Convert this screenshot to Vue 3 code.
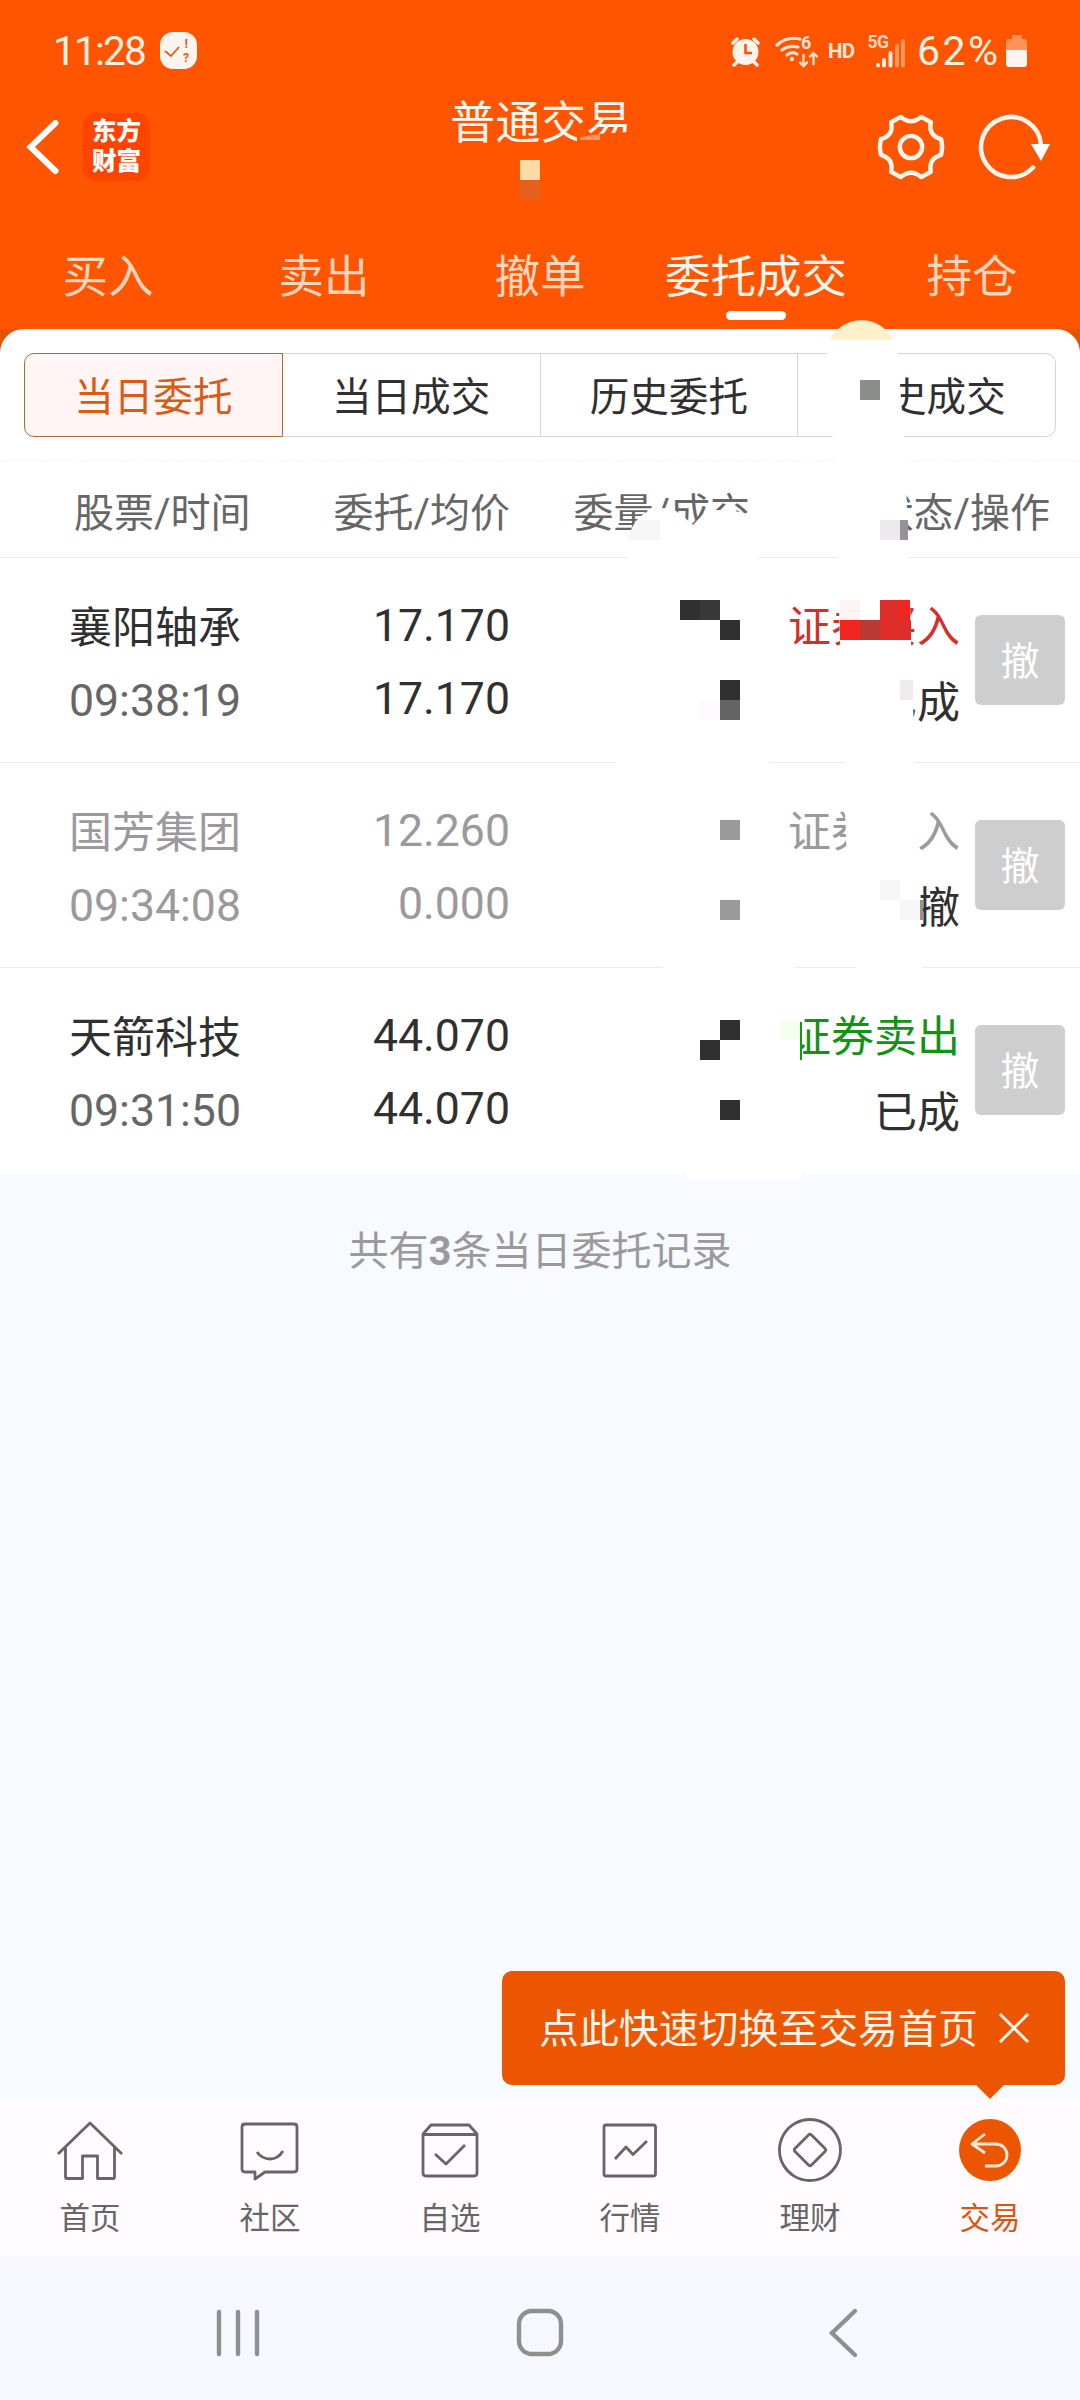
<template>
  <div class="phone">
    <header class="header">
      <div class="status-bar">
        <span class="clock">11:28</span>
        <svg class="notice" width="37" height="37" viewBox="0 0 37 37">
          <rect width="37" height="37" rx="13" fill="#fff3ee" />
          <path d="M5 19l6 5 8-9" fill="none" stroke="#d9601c" stroke-width="1.8" />
          <text x="24.5" y="16" font-size="13" font-weight="700" fill="#d9601c">!</text>
          <text x="23" y="30" font-size="12" font-weight="700" fill="#d9601c">?</text>
        </svg>
        <svg class="signals" width="180" height="40" viewBox="725 30 180 40">
          <g fill="#fff3ee">
            <circle cx="744.500" cy="51" r="13" />
            <path d="M737 60l-4 4M752 60l4 4" stroke="#fff3ee" stroke-width="3.500" stroke-linecap="round" />
            <path d="M732 42l4-4M757 42l-4-4" stroke="#fff3ee" stroke-width="3.500" stroke-linecap="round" />
          </g>
          <path d="M744.500 43v9h6.500" fill="none" stroke="#ff5500" stroke-width="2.600" />
          <g fill="none" stroke="#ffe3d0" stroke-width="3.200" stroke-linecap="round">
            <path d="M776 44q10-9 23-6" />
            <path d="M781 49q7-5 16-3" />
            <path d="M786 54q5-4 10-1" />
            <path d="M802.500 54v11M799 61.500l3.500 3.500 3.500-3.500M812.500 63v-11M809 55.500l3.500-3.500 3.500 3.500" stroke-width="2.400" />
          </g>
          <circle cx="791" cy="58" r="2.200" fill="#ffe3d0" />
          <text x="800" y="48" font-size="18" font-weight="700" fill="#ffe3d0">6</text>
          <text x="827" y="57" font-size="20.500" font-weight="700" fill="#ffe9dc" textLength="27">HD</text>
          <text x="866.500" y="46.500" font-size="17.500" font-weight="700" fill="#ffd9bd" textLength="21.500">5G</text>
          <g stroke-width="3.800" stroke-linecap="round" stroke="#fff3ee">
            <path d="M877 64v.5M883 59v5.500M889.500 52v12.500" />
            <path d="M896 45v19.500M902 40v24.500" stroke="#ff9a63" />
          </g>
        </svg>
        <span class="percent">62%</span>
        <svg class="battery" width="22" height="32" viewBox="0 0 22 32">
          <path d="M6 0h10v4h2q3 0 3 3v8H0V7q0-3 3-3h3z" fill="#ff9159" />
          <path d="M0 15h21v14q0 3-3 3H3q-3 0-3-3z" fill="#fff3ee" />
        </svg>
      </div>

      <div class="title-bar">
        <svg class="back" width="34" height="56" viewBox="0 0 34 56">
          <path d="M30.500 4L5.500 28l25 24" fill="none" stroke="#fff" stroke-width="6" stroke-linecap="round" />
        </svg>
        <div class="logo"><span>东方</span><span>财富</span></div>
        <h1>普通交易</h1>
        <svg class="gear" width="70" height="70" viewBox="-36 -36 72 72" fill="none" stroke="#fff6ee" stroke-width="4.500" stroke-linejoin="round">
          <path d="M-10.500 -31Q0 -22 10.500 -31L20.500 -25.500Q17.500 -12 31 -8Q33 0 31 8Q17.500 12 20.500 25.500L10.500 31Q0 22 -10.500 31L-20.500 25.500Q-17.500 12 -31 8Q-33 0 -31 -8Q-17.500 -12 -20.500 -25.500Z" />
          <circle r="11.500" />
        </svg>
        <svg class="refresh" width="76" height="70" viewBox="-35 -35 76 70">
          <path d="M22 20.500A30 30 0 1 1 30 -2" fill="none" stroke="#fff6ee" stroke-width="4.500" stroke-linecap="round" />
          <path d="M20 -3h19L30 14z" fill="#fff" />
        </svg>
      </div>

      <nav class="tabs">
        <div v-for="tab in tabs" :key="tab" class="tab" :class="{ active: tab === '委托成交' }">
          {{ tab }}
        </div>
      </nav>
    </header>

    <div class="panel-wrap">
      <section class="panel">
        <div class="segments">
          <div v-for="(seg, i) in segments" :key="seg" class="segment" :class="{ active: i === 0 }">
            {{ seg }}
          </div>
        </div>

        <div class="columns">
          <span v-for="col in columns" :key="col">{{ col }}</span>
        </div>

        <div v-for="order in orders" :key="order.time" class="order" :class="{ muted: order.muted }">
          <div class="stock">
            <p>{{ order.name }}</p>
            <p class="time">{{ order.time }}</p>
          </div>
          <div class="price">
            <p>{{ order.price }}</p>
            <p>{{ order.average }}</p>
          </div>
          <div></div>
          <div class="state">
            <p :class="order.side">{{ order.type }}</p>
            <p class="result">{{ order.state }}</p>
          </div>
          <button class="cancel">撤</button>
        </div>
      </section>
    </div>

    <main class="empty">
      <p>共有<b>3</b>条当日委托记录</p>
    </main>

    <footer class="tab-bar">
      <div class="tip">
        <span>点此快速切换至交易首页</span>
        <svg width="32" height="32" viewBox="0 0 32 32">
          <path d="M2 2l28 28M30 2L2 30" stroke="#fff3ea" stroke-width="3" />
        </svg>
      </div>
      <div v-for="item in menu" :key="item.label" class="menu-item" :class="{ current: item.current }">
        <svg width="70" height="70" viewBox="-35 -35 70 70">
          <circle v-if="item.current" r="31" fill="#ec5600" />
          <path :d="item.icon" />
        </svg>
        <span>{{ item.label }}</span>
      </div>
    </footer>

    <div class="system-nav">
      <svg width="360" height="60" viewBox="0 0 360 60"><path d="M219 10v42M238 10v42M257 10v42" /></svg>
      <svg width="360" height="60" viewBox="360 0 360 60"><rect x="519" y="9" width="42" height="43" rx="13" /></svg>
      <svg width="360" height="60" viewBox="720 0 360 60"><path d="M855 9L832 31l23 22" /></svg>
    </div>

    <!-- privacy strokes painted over the account data -->
    <svg class="privacy" width="1080" height="1200" viewBox="0 0 1080 1200">
      <path d="M577 146V137L597 134L630 132V146Z" fill="#ff5500" />
      <path d="M580 137L600 134V140H580Z" fill="#ff9362" />
      <path d="M830 340A35 35 0 0 1 893 340Z" fill="#fff0cc" />
      <g fill="#fff">
        <path d="M826 341H897L904 440L908 530L911 640L915 762L920 860L922 975H857L846 840L840 640L834 460Z" />
        <path d="M628 540Q632 520 648 511L664 508H672L684 517L693 525L706 511L716 510L735 511L748 514L758 557L769 762L795 967L800 1020L803 1172L799 1180H689L685 1172L663 967L640 860L616 762L622 640Z" />
      </g>
      <path d="M628 540Q630 529 639 520H660V540Z" fill="#f7f7f7" />
      <rect v-for="(b, i) in blocks" :key="i" :x="b[0]" :y="b[1]" :width="b[2]" :height="b[3]" :fill="b[4]" />
    </svg>
  </div>
</template>

<script setup>
const tabs = ['买入', '卖出', '撤单', '委托成交', '持仓']
const segments = ['当日委托', '当日成交', '历史委托', '历史成交']
const columns = ['股票/时间', '委托/均价', '委量/成交', '状态/操作']

const orders = [
  { name: '襄阳轴承', time: '09:38:19', price: '17.170', average: '17.170', type: '证券买入', side: 'buy', state: '已成' },
  { name: '国芳集团', time: '09:34:08', price: '12.260', average: '0.000', type: '证券买入', side: 'none', state: '已撤', muted: true },
  { name: '天箭科技', time: '09:31:50', price: '44.070', average: '44.070', type: '证券卖出', side: 'sell', state: '已成' },
]

const menu = [
  { label: '首页', icon: 'M-32 4L0 -27L32 4M-24.500 -3V27Q-24.500 28.500 -23 28.500H-7.500V6H7.500V28.500H23Q24.500 28.500 24.500 27V-3' },
  { label: '社区', icon: 'M-25 -26H24Q27 -26 27 -23V19Q27 22 24 22H-5L-15 29V22H-25Q-28 22 -28 19V-23Q-28 -26 -25 -26ZM-13 2Q-8 9 0 9T13 1' },
  { label: '自选', icon: 'M-27 -16L-19 -25H19L27 -16V23Q27 26 24 26H-24Q-27 26 -27 23ZM-27 -15.500H27M-15 4L-4 14L15 -5' },
  { label: '行情', icon: 'M-24 -25H23Q25.500 -25 25.500 -23V24Q25.500 26 23 26H-24Q-26 26 -26 24V-23Q-26 -25 -24 -25ZM-15 9L-4 -3L3 4.500L17 -9' },
  { label: '理财', icon: 'M0 -30.500A30.500 30.500 0 1 1 -.1 -30.500ZM-1.500 -15L-15 -1.500Q-16.500 0 -15 1.500L-1.500 15Q0 16.500 1.500 15L15 1.500Q16.500 0 15 -1.500L1.500 -15Q0 -16.500 -1.500 -15Z' },
  { label: '交易', icon: 'M-5 -16L-18 -6L-5 3M-18 -6H6A11 11 0 0 1 6 16H-5', current: true },
]

// x, y, width, height, colour
const blocks = [
  [520, 160, 20, 20, '#ffd9a8'],
  [520, 180, 20, 20, '#e5601c'],
  [860, 380, 20, 20, '#8c8e8b'],
  [880, 520, 20, 20, '#eee9ee'],
  [900, 520, 8, 20, '#959295'],
  [680, 600, 20, 20, '#303030'],
  [700, 600, 20, 20, '#383838'],
  [720, 620, 20, 20, '#303030'],
  [840, 600, 20, 20, '#fff4f4'],
  [880, 600, 20, 40, '#df2d2a'],
  [900, 600, 10, 20, '#f12620'],
  [900, 620, 11, 20, '#df2d2a'],
  [840, 620, 20, 20, '#f12620'],
  [860, 620, 20, 20, '#b93a33'],
  [720, 680, 20, 20, '#303030'],
  [720, 700, 20, 20, '#636562'],
  [700, 700, 20, 20, '#fffaff'],
  [900, 680, 13, 20, '#f0ebef'],
  [720, 820, 20, 20, '#9c999c'],
  [720, 900, 20, 20, '#9c999c'],
  [880, 880, 20, 20, '#f7f7f7'],
  [900, 900, 20, 20, '#f7f7f7'],
  [920, 900, 3, 20, '#959295'],
  [720, 1020, 20, 20, '#303030'],
  [700, 1040, 20, 20, '#303030'],
  [720, 1100, 20, 20, '#303030'],
  [780, 1020, 20, 20, '#f5fff0'],
  [800, 1022, 2, 38, '#139a13'],
]
</script>

<style>
body {
  margin: 0;
}
</style>

<style scoped>
.phone {
  position: relative;
  display: flex;
  flex-direction: column;
  width: 1080px;
  height: 2400px;
  overflow: hidden;
  background: #f7fbff;
  color: #303030;
  font-family: Roboto, "Noto Sans CJK SC", sans-serif;
}

p,
h1 {
  margin: 0;
  font-weight: 400;
}

.header {
  height: 329px;
  background: #ff5500;
}

.status-bar {
  display: flex;
  align-items: center;
  box-sizing: border-box;
  height: 88px;
  padding: 13px 52px 0 53px;
  color: #fff0e2;
  font-size: 40px;
}

.clock {
  width: 107px;
  font-size: 40.5px;
  letter-spacing: -1.8px;
}

.signals {
  margin-left: auto;
}

.percent {
  width: 89px;
  margin-left: 11px;
  font-size: 41px;
  letter-spacing: 2.4px;
}

.title-bar {
  display: flex;
  align-items: center;
  height: 118px;
  padding: 0 28px 0 25px;
}

.logo {
  display: flex;
  flex-direction: column;
  justify-content: center;
  align-items: center;
  width: 67px;
  height: 68px;
  margin-left: 24px;
  border-radius: 14px;
  color: #fff;
  background: #ff4400;
  font-size: 24.5px;
  font-weight: 900;
  line-height: 30px;
}

h1 {
  flex: 1;
  margin-left: 56px;
  padding-bottom: 47px;
  color: #fff6ee;
  font-size: 45px;
  letter-spacing: 0.4px;
  line-height: 60px;
  text-align: center;
}

.gear {
  margin-right: 30px;
}

.tabs {
  display: flex;
  padding-top: 42px;
}

.tab {
  display: flex;
  flex: 1 0 216px;
  flex-direction: column;
  align-items: center;
  color: #ffd5bb;
  font-size: 45.5px;
  line-height: 60px;
}

.tab.active {
  color: #fff6ee;
}

.tab.active::after {
  width: 60px;
  height: 9px;
  margin-top: 3px;
  border-radius: 5px;
  background: #fff;
  content: '';
}

.panel-wrap {
  background: linear-gradient(#e35300 24px, #fff 24px);
}

.panel {
  padding-top: 24px;
  border-radius: 24px 24px 0 0;
  background: #fff;
}

.segments {
  display: flex;
  box-sizing: border-box;
  height: 107px;
  padding: 0 24px 23px;
}

.segment {
  flex: 1 1 0;
  box-sizing: border-box;
  border: 1px solid #d5d5d9;
  border-left-width: 0;
  font-size: 39.6px;
  line-height: 87px;
  text-align: center;
}

.segment:last-child {
  border-radius: 0 10px 10px 0;
}

.segment.active {
  border: 1px solid #b5653a;
  border-radius: 10px 0 0 10px;
  color: #da5b16;
  background: #fff5f5;
}

.columns {
  display: grid;
  grid-template-columns: 236px 200px 240px 300px;
  box-sizing: border-box;
  height: 98px;
  padding-left: 74px;
  border-top: 1px dashed #f5f5f5;
  border-bottom: 1px solid #ebebeb;
  color: #666;
  font-size: 40px;
  line-height: 105px;
  text-align: right;
}

.columns span:first-child {
  text-align: left;
}

.order {
  display: grid;
  grid-template-columns: 241px 200px 240px 210px 90px;
  box-sizing: border-box;
  height: 205px;
  padding-left: 69px;
  border-bottom: 1px solid #ebebeb;
  font-size: 43px;
}

.order:last-child {
  border-bottom: 0;
}

.stock {
  padding-top: 34px;
  line-height: 73px;
}

.time {
  color: #666;
  font-size: 44.6px;
}

.price {
  padding-top: 32px;
  font-size: 44.6px;
  line-height: 73px;
  text-align: right;
}

.state {
  padding-top: 31px;
  line-height: 76px;
  text-align: right;
}

.muted,
.muted .time {
  color: #9c999c;
}

.buy {
  color: #d2302c;
}

.sell {
  color: #139313;
}

.result {
  color: #303030;
}

.cancel {
  width: 90px;
  height: 90px;
  margin: 57px 0 0 15px;
  padding: 4px 0 0;
  border: 0;
  border-radius: 6px;
  color: #fff;
  background: #cecece;
  font-family: inherit;
  font-size: 39px;
  line-height: 86px;
}

.empty {
  flex: 1;
  padding-top: 49px;
  color: #9c999c;
  font-size: 40px;
  line-height: 60px;
  text-align: center;
}

.empty b {
  font-weight: 700;
}

.tab-bar {
  position: relative;
  display: flex;
  height: 157px;
  background: #fffbff;
}

.tip {
  position: absolute;
  top: -128px;
  right: 15px;
  display: flex;
  align-items: center;
  justify-content: space-between;
  box-sizing: border-box;
  width: 563px;
  height: 114px;
  padding: 0 35px 0 37px;
  border-radius: 10px;
  color: #fff3ea;
  background: #ec5600;
  font-size: 39.9px;
}

.tip span {
  padding-bottom: 6px;
}

.tip::after {
  position: absolute;
  top: 113px;
  right: 60px;
  border: 15px solid transparent;
  border-top-color: #ec5600;
  border-bottom: 0;
  content: '';
}

.menu-item {
  display: flex;
  flex: 1;
  flex-direction: column;
  align-items: center;
  padding-top: 16px;
  color: #666;
  font-size: 30.5px;
  line-height: 40px;
}

.menu-item path {
  fill: none;
  stroke: #666;
  stroke-width: 2.8;
  stroke-linejoin: round;
}

.menu-item span {
  margin-top: 14px;
}

.menu-item.current {
  color: #dc5510;
}

.menu-item.current path {
  stroke: #ffeadb;
}

.system-nav {
  display: flex;
  align-items: center;
  height: 144px;
  background: #f7f8ff;
}

.system-nav svg {
  margin-top: 7px;
  fill: none;
  stroke: #8f8f8f;
  stroke-width: 4.4;
  stroke-linecap: round;
}

.privacy {
  position: absolute;
  top: 0;
  left: 0;
  pointer-events: none;
}
</style>
